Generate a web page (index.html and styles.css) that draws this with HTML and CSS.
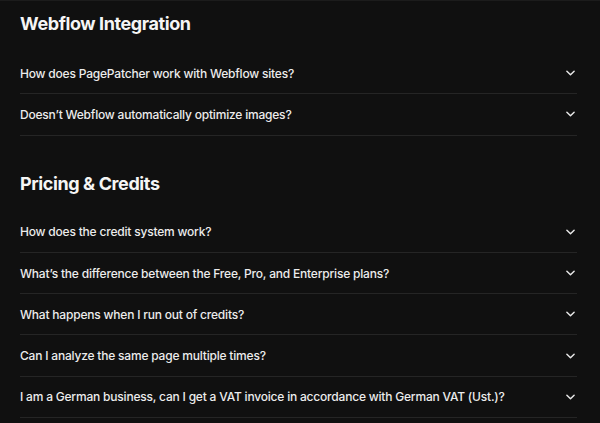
FILE: index.html
```html
<!DOCTYPE html>
<html>
<head>
<meta charset="utf-8">
<link rel="stylesheet" href="styles.css">
</head>
<body>
<main class="page">
  <section class="group">
    <h2 class="group-title">Webflow Integration</h2>
    <ul class="faq">
      <li class="faq-item"><span class="q">How does PagePatcher work with Webflow sites?</span><svg class="chev" viewBox="0 0 10 6"><path d="M1 1l4 4 4-4"/></svg></li>
      <li class="faq-item"><span class="q">Doesn’t Webflow automatically optimize images?</span><svg class="chev" viewBox="0 0 10 6"><path d="M1 1l4 4 4-4"/></svg></li>
    </ul>
  </section>
  <section class="group group-next">
    <h2 class="group-title">Pricing &amp; Credits</h2>
    <ul class="faq">
      <li class="faq-item"><span class="q">How does the credit system work?</span><svg class="chev" viewBox="0 0 10 6"><path d="M1 1l4 4 4-4"/></svg></li>
      <li class="faq-item"><span class="q">What’s the difference between the Free, Pro, and Enterprise plans?</span><svg class="chev" viewBox="0 0 10 6"><path d="M1 1l4 4 4-4"/></svg></li>
      <li class="faq-item"><span class="q">What happens when I run out of credits?</span><svg class="chev" viewBox="0 0 10 6"><path d="M1 1l4 4 4-4"/></svg></li>
      <li class="faq-item"><span class="q">Can I analyze the same page multiple times?</span><svg class="chev" viewBox="0 0 10 6"><path d="M1 1l4 4 4-4"/></svg></li>
      <li class="faq-item"><span class="q">I am a German business, can I get a VAT invoice in accordance with German VAT (Ust.)?</span><svg class="chev" viewBox="0 0 10 6"><path d="M1 1l4 4 4-4"/></svg></li>
    </ul>
  </section>
</main>
</body>
</html>
```
FILE: styles.css
```css
html, body {
  margin: 0;
  padding: 0;
  background: #101010;
}
body {
  font-family: Inter, "Liberation Sans", sans-serif;
  color: #f2f2f2;
  border-top: 1px solid #1c1c1c;
  overflow: hidden;
}
.page {
  padding: 11px 23px 0 20px;
}
.group-title {
  margin: 0 0 17px;
  font-size: 18px;
  line-height: 24px;
  font-weight: 700;
  letter-spacing: -0.4px;
  color: #f5f5f5;
}
.group-next {
  margin-top: 36px;
}
.group-next .group-title {
  margin-bottom: 16px;
}
.faq {
  list-style: none;
  margin: 0;
  padding: 0;
}
.faq-item {
  display: flex;
  align-items: center;
  justify-content: space-between;
  height: 40.3px;
  border-bottom: 1px solid #252525;
}
.q {
  font-size: 12px;
  font-weight: 500;
  letter-spacing: -0.2px;
  color: #ececec;
}
.chev {
  width: 9px;
  height: 6px;
  margin-right: 2px;
  fill: none;
  stroke: #e8e8e8;
  stroke-width: 1.6;
  stroke-linecap: round;
  stroke-linejoin: round;
}
```
